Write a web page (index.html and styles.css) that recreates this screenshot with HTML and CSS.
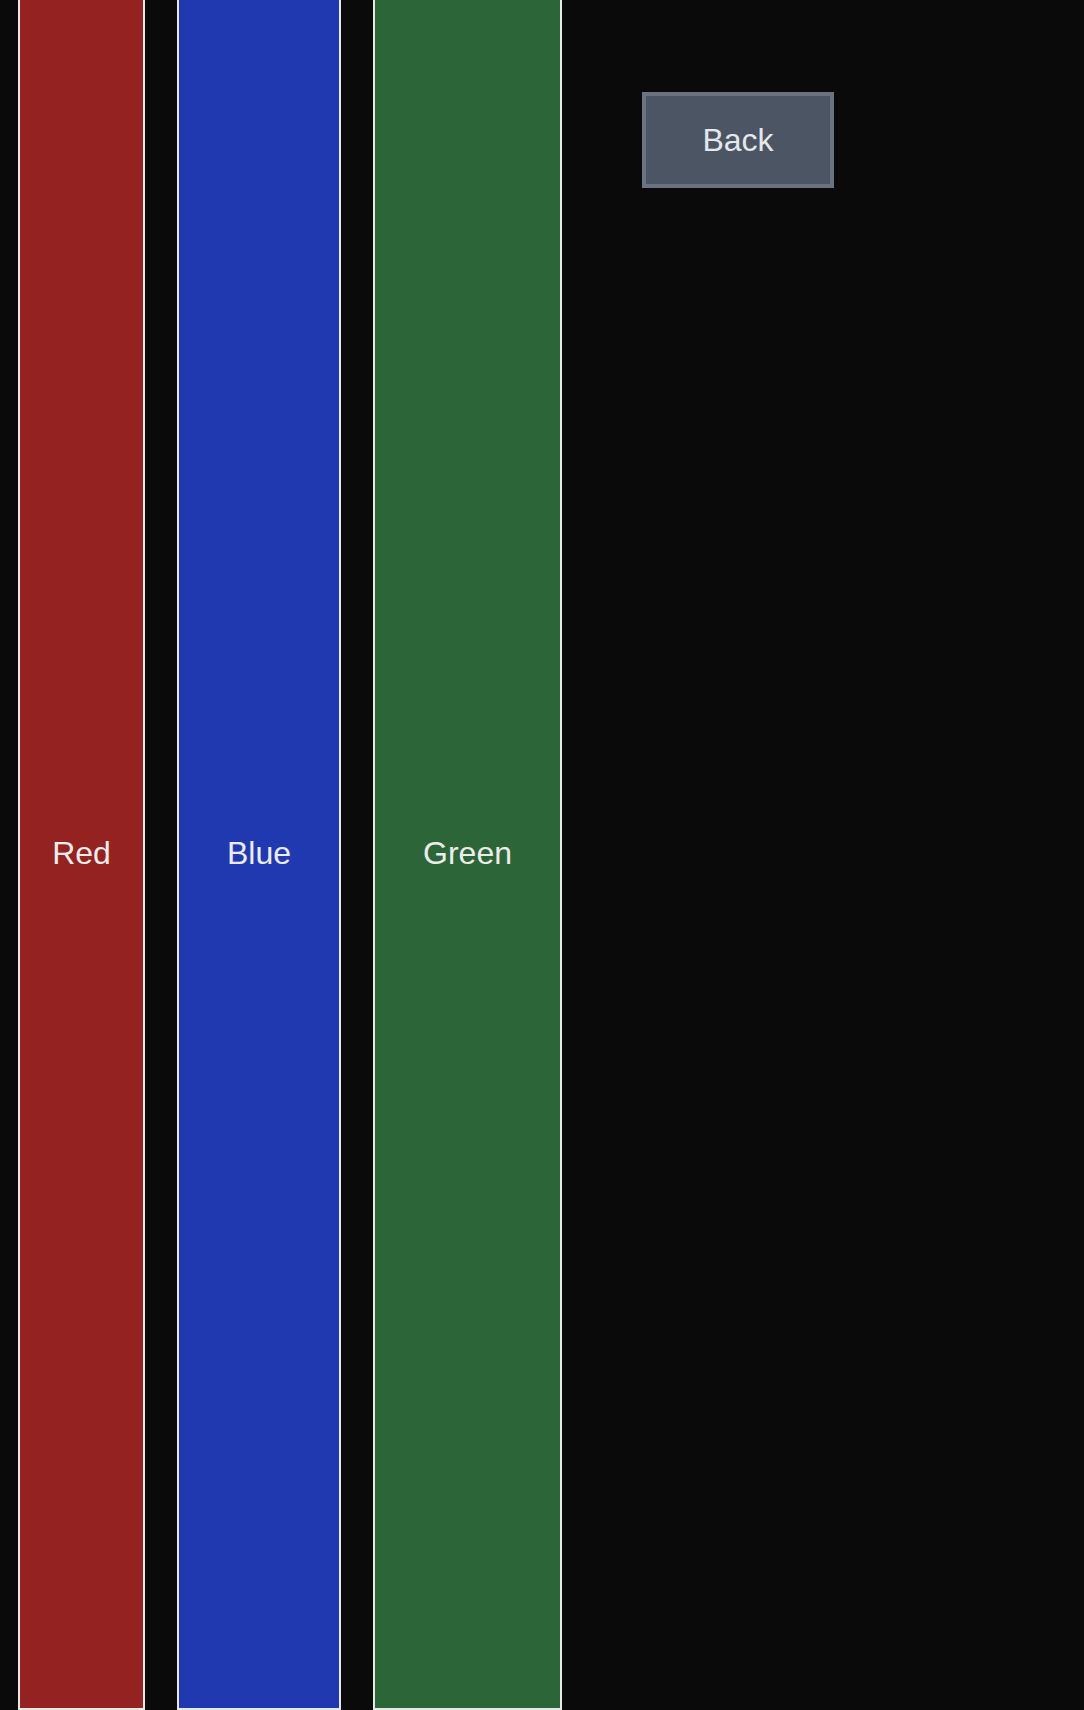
FILE: index.html
```html
<!DOCTYPE html>
<html>
<head>
<meta charset="utf-8">
<link rel="stylesheet" href="styles.css">
</head>
<body>
<div class="page">
  <div class="col col-red">Red</div>
  <div class="col col-blue">Blue</div>
  <div class="col col-green">Green</div>
  <div class="side">
    <button class="back">Back</button>
  </div>
</div>
</body>
</html>
```

FILE: styles.css
```css
html, body {
  margin: 0;
  padding: 0;
  background: #0a0a0a;
  height: 1710px;
  overflow: hidden;
}
.page {
  display: flex;
  gap: 32px;
  padding-left: 18px;
  height: 1710px;
  font-family: "Liberation Sans", Arial, sans-serif;
}
.col {
  box-sizing: border-box;
  height: 1710px;
  border: 2px solid #e8e8e8;
  border-top: none;
  padding-bottom: 2px;
  display: flex;
  align-items: center;
  justify-content: center;
  color: #ececec;
  font-size: 32px;
}
.col-red { width: 127px; background: #932220; }
.col-blue { width: 164px; background: #2139b0; }
.col-green { width: 189px; background: #2c6537; }
.side {
  padding-left: 48px;
  padding-top: 92px;
}
.back {
  box-sizing: border-box;
  width: 192px;
  height: 96px;
  background: #4b5563;
  border: 4px solid #6b7280;
  color: #e5e7eb;
  font-family: "Liberation Sans", Arial, sans-serif;
  font-size: 32px;
  padding: 0;
}
```
